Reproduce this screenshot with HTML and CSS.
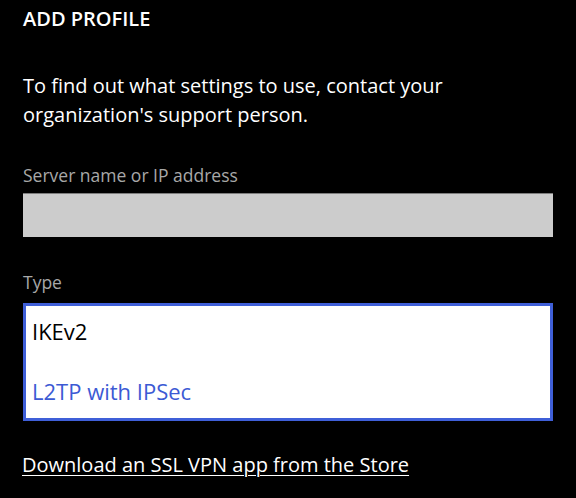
FILE: index.html
```html
<!DOCTYPE html>
<html lang="en">
<head>
<meta charset="utf-8">
<title>Add profile</title>
<link rel="stylesheet" href="styles.css">
</head>
<body>
<main class="page">
  <h1 class="title">ADD PROFILE</h1>
  <p class="intro">To find out what settings to use, contact your organization's support person.</p>
  <label class="field-label" for="server">Server name or IP address</label>
  <div class="text-box" id="server"></div>
  <div class="field-label type-label">Type</div>
  <div class="picker">
    <div class="option option-selected">IKEv2</div>
    <div class="option option-accent">L2TP with IPSec</div>
  </div>
  <a class="store-link" href="#">Download an SSL VPN app from the Store</a>
</main>
</body>
</html>
```
FILE: styles.css
```css
html, body {
  margin: 0;
  padding: 0;
  background: #000;
}
.page {
  width: 530px;
  padding: 5px 23px 0 23px;
  font-family: "Open Sans", "Noto Sans", sans-serif;
  color: #fff;
  display: flex;
  flex-direction: column;
  align-items: flex-start;
}
.title {
  margin: 0;
  font-size: 20px;
  line-height: 28px;
  font-weight: 600;
  letter-spacing: 0;
}
.intro {
  margin: 39px 0 0 0;
  font-size: 20px;
  line-height: 28.5px;
  width: 440px;
}
.field-label {
  display: block;
  margin-top: 34px;
  font-size: 17.5px;
  line-height: 24px;
  color: #a8a8a8;
}
.type-label {
  margin-top: 33px;
}
.text-box {
  align-self: stretch;
  margin-top: 6px;
  height: 43px;
  background: #cccccc;
  border-top: 1px solid #7c7c7c;
}
.picker {
  align-self: stretch;
  margin-top: 9px;
  box-sizing: border-box;
  height: 118px;
  border: 3px solid #3f5fd8;
  background: #fff;
  padding: 11px 0 0 6px;
  display: flex;
  flex-direction: column;
  gap: 32px;
}
.option {
  font-size: 22px;
  line-height: 28px;
}
.option-selected {
  color: #000;
}
.option-accent {
  color: #3c5ad4;
}
.store-link {
  margin-top: 31px;
  margin-left: -1px;
  font-size: 20px;
  line-height: 26px;
  color: #fff;
  text-decoration: underline;
  text-underline-offset: 3px;
  text-decoration-thickness: 1px;
}
```
